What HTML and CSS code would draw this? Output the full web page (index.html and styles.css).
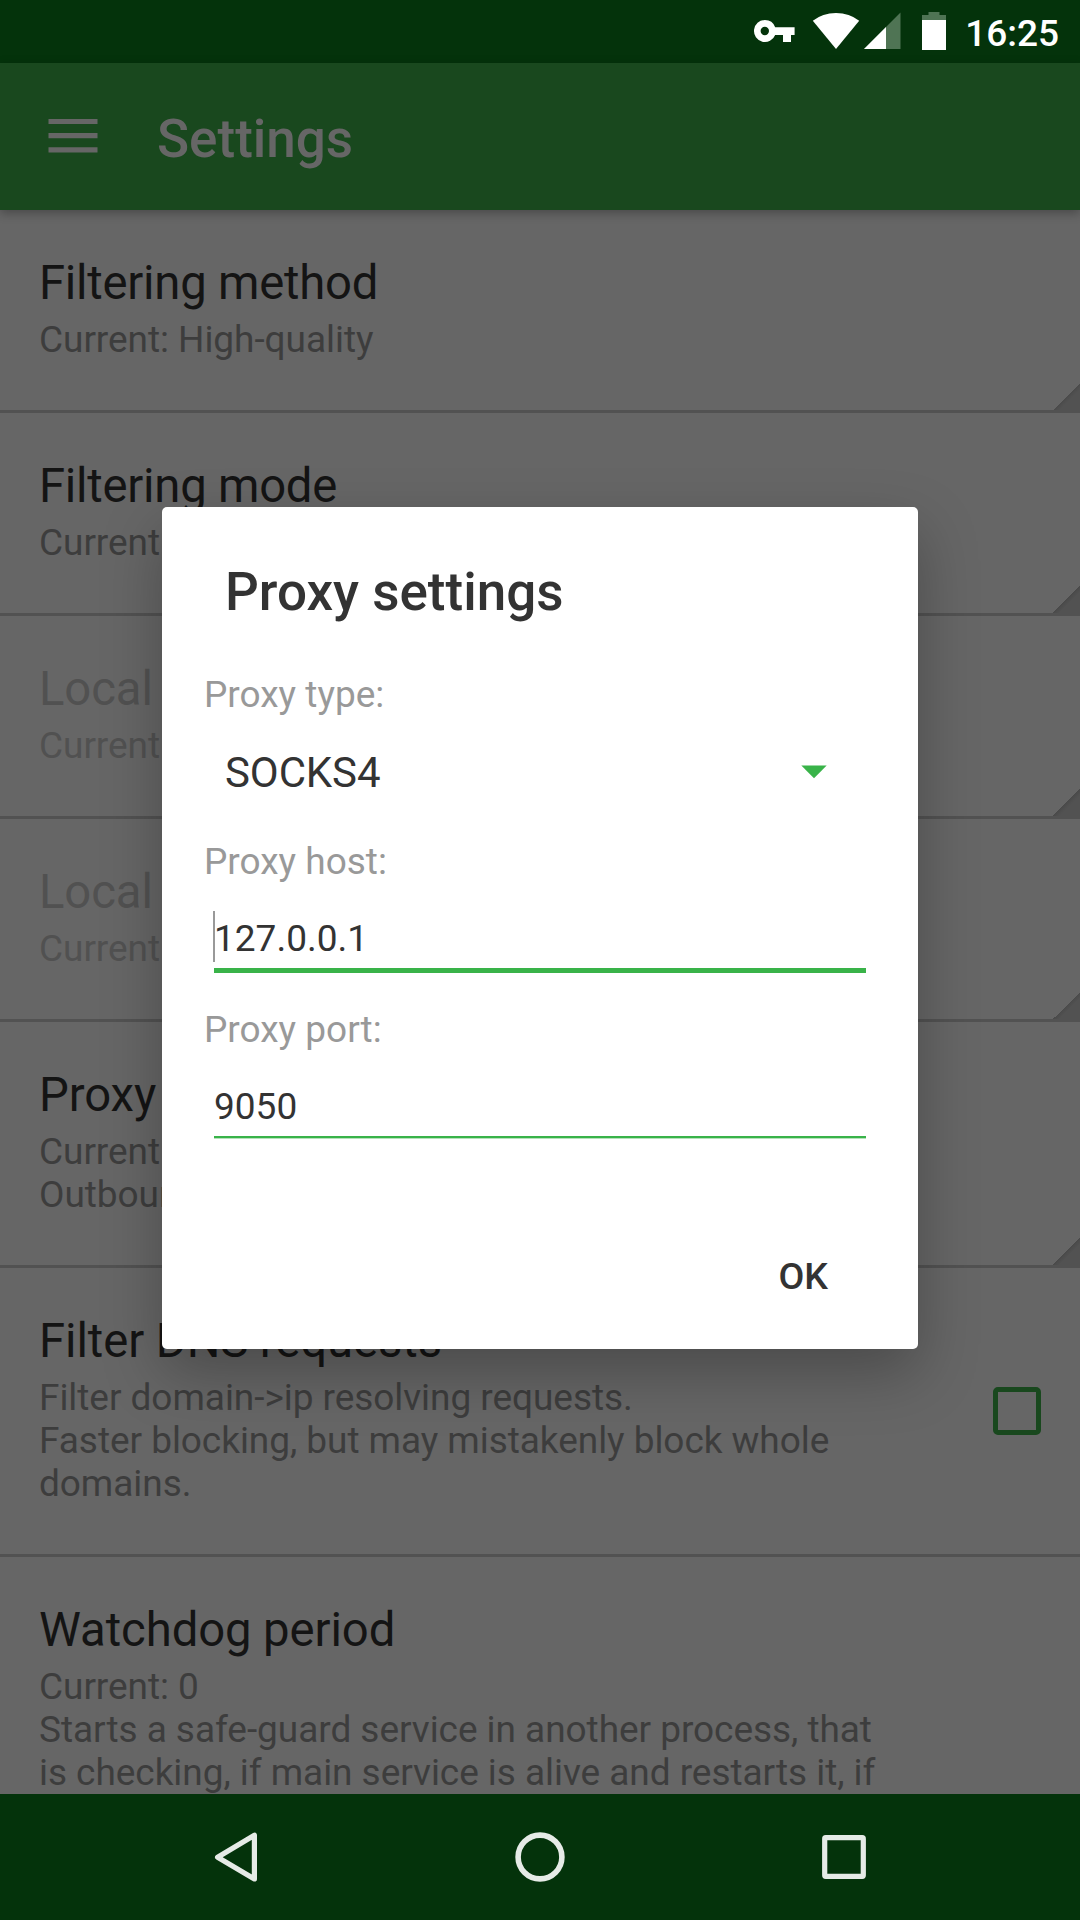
FILE: index.html
```html
<!DOCTYPE html>
<html lang="en">
<head>
<meta charset="utf-8">
<title>Settings</title>
<link rel="stylesheet" href="styles.css">
</head>
<body>
<div class="screen">
  <header class="status-bar">
    <svg class="status-icons" width="200" height="63" viewBox="750 0 200 63">
      <path fill="#fff" fill-rule="evenodd" d="M764.8 20a11 11 0 0 1 10.4 7.3H794.6V35H791v7h-8v-7h-7.8A11 11 0 1 1 764.8 20zm0 6.800a4.200 4.200 0 1 0 0 8.400a4.200 4.200 0 0 0 0-8.400z"/>
      <path fill="#fff" d="M836 49L812.800 20.700Q822.500 12.900 836 12.900T859.200 20.700z"/>
      <path fill="#4f7454" d="M900.500 12.500V49H864z"/>
      <path fill="#fff" d="M886 27V49H864z"/>
      <path fill="#4f7454" d="M928.500 12h11v3h6.500v6h-24v-6h6.500z"/>
      <path fill="#fff" d="M922 20h24v30h-24z"/>
    </svg>
    <span class="clock">16:25</span>
  </header>

  <div class="toolbar">
    <svg class="menu-icon" width="50" height="35" viewBox="0 0 50 35">
      <path fill="#666" d="M.5.900h49v5.200H.500zM.5 15h49v5.200H.500zM.5 29.200h49v5.200H.500z"/>
    </svg>
    <h1 class="toolbar-title">Settings</h1>
  </div>

  <main class="list">
    <section class="row more">
      <h2 class="row-title tight">Filtering method</h2>
      <p class="row-text">Current: High-quality</p>
    </section>
    <section class="row more">
      <h2 class="row-title tight">Filtering mode</h2>
      <p class="row-text">Current</p>
    </section>
    <section class="row more disabled">
      <h2 class="row-title">Local</h2>
      <p class="row-text">Current</p>
    </section>
    <section class="row more disabled">
      <h2 class="row-title">Local</h2>
      <p class="row-text">Current</p>
    </section>
    <section class="row more">
      <h2 class="row-title">Proxy</h2>
      <p class="row-text">Current<br>Outbound</p>
    </section>
    <section class="row with-check">
      <div>
        <h2 class="row-title">Filter DNS requests</h2>
        <p class="row-text">Filter domain-&gt;ip resolving requests.<br>Faster blocking, but may mistakenly block whole<br>domains.</p>
      </div>
      <span class="checkbox"></span>
    </section>
    <section class="row">
      <h2 class="row-title">Watchdog period</h2>
      <p class="row-text">Current: 0<br>Starts a safe-guard service in another process, that<br>is checking, if main service is alive and restarts it, if</p>
    </section>
  </main>

  <nav class="nav-bar">
    <svg width="1080" height="126" viewBox="0 0 1080 126" fill="none" stroke="#e6ebe7" stroke-width="5.200" stroke-linejoin="round">
      <path d="M254.400 41.200V85L217.600 63.200z"/>
      <circle cx="540" cy="63" r="21.900" stroke-width="5.600"/>
      <rect x="824.700" y="43.700" width="38.600" height="38.600" rx="1"/>
    </svg>
  </nav>

  <div class="dialog">
    <h2 class="dialog-title">Proxy settings</h2>
    <div class="label">Proxy type:</div>
    <div class="spinner">
      <span>SOCKS4</span>
      <svg class="caret" width="26" height="14" viewBox="0 0 26 14"><path fill="#39b349" d="M.300.400h25.400L13 13.200z"/></svg>
    </div>
    <div class="label">Proxy host:</div>
    <div class="field focused"><i class="cursor"></i>127.0.0.1</div>
    <div class="label">Proxy port:</div>
    <div class="field">9050</div>
    <div class="actions">OK</div>
  </div>
</div>
</body>
</html>
```
FILE: styles.css
```css
* { box-sizing: border-box; }
body { margin: 0; font-family: Roboto, "Liberation Sans", sans-serif; }
h1, h2, p { margin: 0; font-weight: 400; }
svg { display: block; flex: none; }

.screen {
  position: relative;
  display: flex;
  flex-direction: column;
  width: 1080px;
  height: 1920px;
  overflow: hidden;
  background: #666;
}

.status-bar {
  display: flex;
  justify-content: flex-end;
  flex: none;
  height: 63px;
  padding-right: 21px;
  background: #04330b;
}
.status-icons { margin-right: 15px; }
.clock {
  width: 94px;
  color: #fff;
  font-size: 37px;
  font-weight: 500;
  line-height: 67px;
  text-align: right;
  white-space: nowrap;
}

.toolbar {
  display: flex;
  flex: none;
  height: 147px;
  padding-left: 48px;
  background: #19481e;
  box-shadow: 0 3px 10px rgba(0, 0, 0, .3);
  z-index: 1;
}
.menu-icon { margin-top: 55px; }
.toolbar-title {
  margin: 45px 0 0 59px;
  color: #666;
  font-size: 53px;
  font-weight: 500;
  line-height: 62px;
}

.list { flex: 1; min-height: 0; overflow: hidden; }
.row {
  padding: 45px 39px 49px;
  border-bottom: 3px solid #525252;
  white-space: nowrap;
}
.more {
  background: linear-gradient(135deg, transparent 50%, #4a4a4a 50%, #525252 62%) right bottom / 27px 27px no-repeat;
}
.row-title {
  margin-bottom: 7px;
  color: #141414;
  font-size: 47.25px;
  letter-spacing: -.09px;
  line-height: 56px;
}
.tight { letter-spacing: -.25px; }
.row-text {
  color: #3d3d3d;
  font-size: 37px;
  letter-spacing: -.05px;
  line-height: 43px;
}
.disabled .row-title, .disabled .row-text { color: #515151; }
.with-check {
  display: flex;
  justify-content: space-between;
}
.checkbox {
  width: 48px;
  height: 48px;
  margin-top: 74px;
  border: 5px solid #19481e;
  border-radius: 5px;
}

.nav-bar { flex: none; height: 126px; background: #04330b; }

/* Modal shown above the list */
.dialog {
  position: absolute;
  left: 162px;
  top: 507px;
  z-index: 2;
  width: 756px;
  height: 842px;
  padding: 54px 42px 0;
  border-radius: 5px;
  background: #fff;
  box-shadow: 0 24px 60px rgba(0, 0, 0, .27);
  color: #333;
}
.dialog-title {
  margin: 0 21px 50px;
  font-size: 53px;
  font-weight: 500;
  line-height: 62px;
}
.label { color: #999; font-size: 37px; line-height: 43px; }
.spinner {
  display: flex;
  justify-content: space-between;
  height: 124px;
  padding: 32px 49.5px 0 21px;
  font-size: 42px;
  letter-spacing: -.1px;
  line-height: 50px;
}
.caret { margin-top: 17px; }
.field {
  position: relative;
  height: 87px;
  margin: 0 10px 38px;
  padding-top: 34px;
  border-bottom: 2px solid #39b349;
  box-shadow: 0 1px #b5e2bb;
  font-size: 37px;
  line-height: 43px;
}
.focused {
  height: 90px;
  margin-bottom: 35px;
  border-bottom-width: 5px;
  box-shadow: none;
}
.cursor {
  position: absolute;
  left: -1px;
  top: 28px;
  width: 2px;
  height: 51px;
  background: #999;
}
.actions {
  margin-top: 117px;
  padding-right: 48px;
  font-size: 37.5px;
  font-weight: 500;
  line-height: 43px;
  text-align: right;
}
```
